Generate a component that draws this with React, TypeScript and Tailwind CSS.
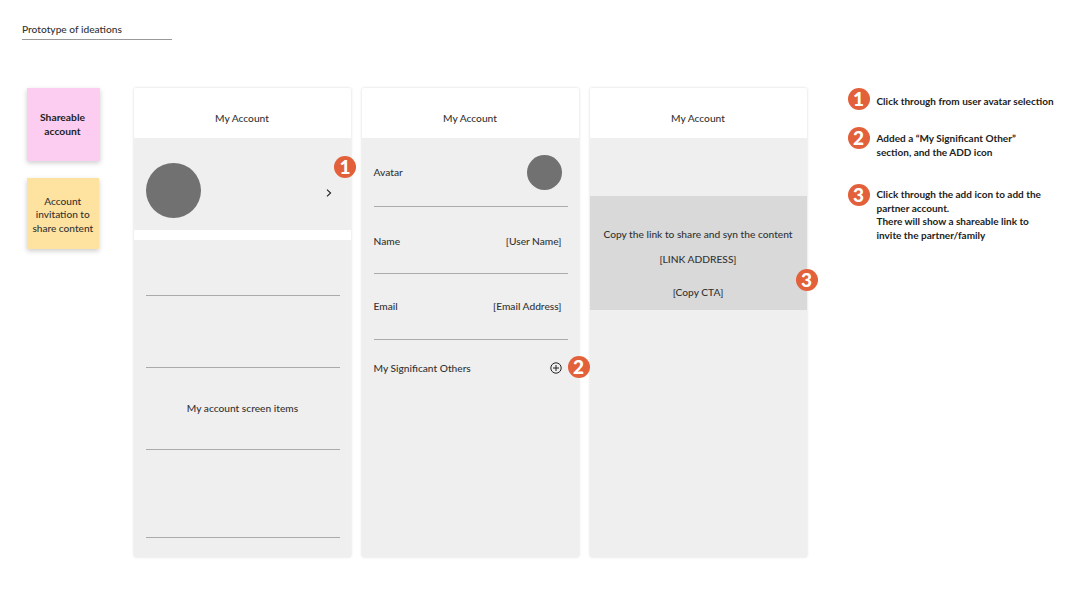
import type { ReactNode } from 'react'

function Badge({ n, className = '' }: { n: number; className?: string }) {
  return (
    <div className={`w-[22px] h-[22px] rounded-full bg-[#e2603a] text-white font-black text-[19px] leading-[22px] text-center shrink-0 ${className}`}>
      {n}
    </div>
  )
}

function Phone({ children }: { children: ReactNode }) {
  return (
    <div className="w-[217px] h-[469px] flex flex-col rounded-[2px] bg-[#efefef] shadow-[0_0_3px_rgba(0,0,0,0.16)] overflow-hidden">
      <div className="h-[50px] shrink-0 bg-white flex items-center justify-center pt-[11px] text-[10.2px] font-medium text-[#333]">My Account</div>
      {children}
    </div>
  )
}

function Rule({ className = '' }: { className?: string }) {
  return <div className={`h-px bg-[#aaa] ${className}`} />
}

function Field({ label, value, h, pt }: { label: string; value: string; h: string; pt: string }) {
  return (
    <div className={`${h} ml-[12px] mr-[11px] flex flex-col`}>
      <div className={`flex justify-between ${pt} pr-[6px] text-[10.2px] leading-[14px] font-medium text-[#333]`}>
        <span>{label}</span>
        <span>{value}</span>
      </div>
      <Rule className="mt-auto" />
    </div>
  )
}

const LEGEND = [
  { n: 1, h: 'h-[39px]', pt: 'pt-[6.5px]', lines: ['Click through from user avatar selection'] },
  { n: 2, h: 'h-[57px]', pt: 'pt-[5px]', lines: ['Added a “My Significant Other”', 'section, and the ADD icon'] },
  { n: 3, h: 'h-[60px]', pt: 'pt-[4px]', lines: ['Click through the add icon to add the', 'partner account.', 'There will show a shareable link to', 'invite the partner/family'] },
]

export default function App() {
  return (
    <div className="w-[1067px] h-[600px] overflow-hidden bg-white font-['Lato',sans-serif] text-[#333]">
      <div className="ml-[22px] w-[150px] h-[40px] pt-[21.5px] border-b border-[#999] text-[10.2px] leading-[14px] font-medium">
        Prototype of ideations
      </div>

      <div className="flex mt-[48px] pl-[27px]">
        {/* stickies */}
        <div className="w-[106.5px] shrink-0 flex flex-col gap-[17px]">
          <div className="w-[73px] h-[73px] pr-[2px] bg-[#fccdf1] shadow-[0_2px_5px_rgba(0,0,0,0.2)] flex items-center justify-center text-center text-[10.3px] leading-[13.5px] font-bold text-[#222]">
            Shareable<br />account
          </div>
          <div className="w-[71.5px] h-[71px] pt-[3px] bg-[#fee2a0] shadow-[0_2px_5px_rgba(0,0,0,0.2)] flex items-center justify-center text-center text-[10.1px] leading-[13.5px] font-medium">
            Account<br />invitation to<br />share content
          </div>
        </div>

        {/* screens */}
        <div className="relative w-[673px] shrink-0 flex gap-[11px]">
          <Phone>
            <div className="h-[92px] shrink-0 flex items-center justify-between pl-3 pr-[18.5px]">
              <div className="w-[55px] h-[55px] rounded-full bg-[#717171] mt-[12px]" />
              <svg width="6" height="8" viewBox="0 0 6 8" fill="none" className="mt-[18px]">
                <path d="M1 .7 4.6 4 1 7.3" stroke="#222" strokeWidth="1.1" />
              </svg>
            </div>
            <div className="h-[10px] shrink-0 bg-white" />
            <div className="flex-1 flex flex-col pl-[12px] pr-[11px] text-[10.2px] font-medium text-[#333] text-center">
              <Rule className="mt-[55px]" />
              <Rule className="mt-[71px]" />
              <div className="h-[81px] flex items-center justify-center pt-[1px]">My account screen items</div>
              <Rule />
              <Rule className="mt-[87px]" />
            </div>
          </Phone>

          <Phone>
            <div className="h-[68.5px] ml-[12px] mr-[11px] shrink-0 flex flex-col">
              <div className="flex-1 flex items-center justify-between pr-[5.5px] text-[10.2px] font-medium">
                <span className="mt-[2px]">Avatar</span>
                <div className="w-[35px] h-[35px] rounded-full bg-[#717171] mt-[1px]" />
              </div>
              <Rule />
            </div>
            <Field label="Name" value="[User Name]" h="h-[67px]" pt="pt-[27px]" />
            <Field label="Email" value="[Email Address]" h="h-[66px]" pt="pt-[25px]" />
            <div className="ml-[12px] mr-[11px] pr-[6px] pt-[21px] flex items-center justify-between text-[10.2px] leading-[14px] font-medium">
              <span>My Significant Others</span>
              <svg width="12" height="12" viewBox="0 0 12 12" fill="none" stroke="#222" strokeWidth="1">
                <circle cx="6" cy="6" r="5.2" />
                <path d="M6 3v6M3 6h6" />
              </svg>
            </div>
          </Phone>

          <Phone>
            <div className="h-[57.5px] shrink-0" />
            <div className="h-[114.5px] shrink-0 bg-[#d9d9d9] flex flex-col items-center text-[10.2px] leading-[14px] font-medium">
              <span className="mt-[31px]">Copy the link to share and syn the content</span>
              <span className="mt-[11px]">[LINK ADDRESS]</span>
              <span className="mt-[19px]">[Copy CTA]</span>
            </div>
          </Phone>

          <Badge n={1} className="absolute left-[200.5px] top-[68px]" />
          <Badge n={2} className="absolute left-[434px] top-[268px]" />
          <Badge n={3} className="absolute left-[662px] top-[181px]" />
        </div>

        {/* notes */}
        <div className="ml-[41px] flex flex-col text-[10px] leading-[13.5px] font-bold text-[#222]">
          {LEGEND.map(item => (
            <div key={item.n} className={`flex gap-[7px] ${item.h}`}>
              <Badge n={item.n} />
              <div className={`whitespace-nowrap ${item.pt}`}>
                {item.lines.map(line => <div key={line}>{line}</div>)}
              </div>
            </div>
          ))}
        </div>
      </div>
    </div>
  )
}
